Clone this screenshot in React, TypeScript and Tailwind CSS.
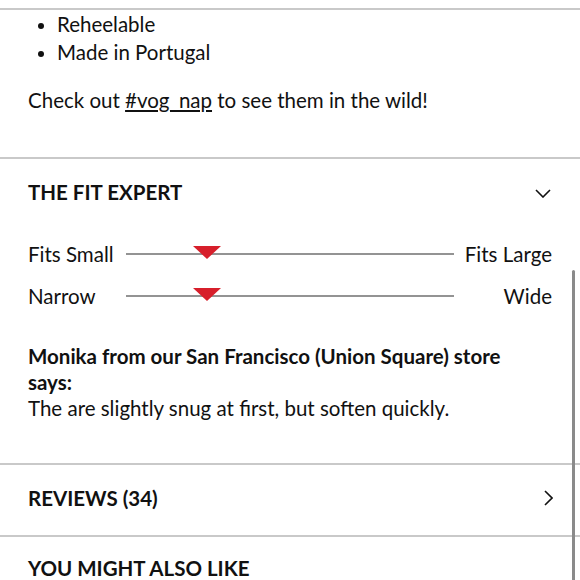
import React from 'react';

const font = { fontFamily: 'Lato, "Noto Sans", sans-serif' };

function FitRow({ left, right }: { left: string; right: string }) {
  return (
    <div className="flex h-[28px] items-center">
      <span className="w-[98px] shrink-0 whitespace-nowrap">{left}</span>
      <div className="relative h-[1.5px] flex-1 bg-[#939393]">
        {/* marker */}
        <svg
          className="absolute left-[67px] top-[-7px]"
          width="28"
          height="13"
          viewBox="0 0 28 13"
        >
          <path d="M0 0 H28 L14 13 Z" fill="#d71f2b" />
        </svg>
      </div>
      <span className="w-[98px] shrink-0 whitespace-nowrap text-right">{right}</span>
    </div>
  );
}

export default function App() {
  return (
    <div
      className="relative h-[580px] w-[580px] overflow-hidden bg-white text-[20.5px] text-[#111]"
      style={font}
    >
      <div className="h-[10px] border-b-2 border-[#c9c9c9]" />

      <div className="px-[28px]">
        <ul className="list-disc pl-[29px] leading-[28px] marker:text-[19px]">
          <li>Reheelable</li>
          <li>Made in Portugal</li>
        </ul>
        <p className="mt-[20px] leading-[28px]">
          Check out <span className="underline underline-offset-2">#vog_nap</span> to see them in the wild!
        </p>
      </div>

      <div className="mt-[43px] border-b-2 border-[#c9c9c9]" />

      <div className="px-[28px] pt-[19px]">
        <div className="flex h-[28px] items-center justify-between">
          <h3 className="font-bold">THE FIT EXPERT</h3>
          <svg width="16" height="9" viewBox="0 0 16 9" className="mr-[1px] mt-[3px]">
            <path d="M1 1 L8 8 L15 1" fill="none" stroke="#111" strokeWidth="1.6" />
          </svg>
        </div>

        <div className="mt-[34px] flex flex-col gap-[14px]">
          <FitRow left="Fits Small" right="Fits Large" />
          <FitRow left="Narrow" right="Wide" />
        </div>

        <div className="mt-[33px] leading-[26px]">
          <p className="pr-[20px] font-bold">Monika from our San Francisco (Union Square) store says:</p>
          <p>The are slightly snug at first, but soften quickly.</p>
        </div>
      </div>

      <div className="mt-[42px] border-b-2 border-[#c9c9c9]" />

      <div className="flex h-[70px] items-center justify-between px-[28px] pb-[4px]">
        <h3 className="font-bold">REVIEWS (34)</h3>
        <svg width="9" height="16" viewBox="0 0 9 16" className="mr-[-1px]">
          <path d="M1 1 L8 8 L1 15" fill="none" stroke="#111" strokeWidth="1.6" />
        </svg>
      </div>

      <div className="border-b-2 border-[#c9c9c9]" />

      <div className="px-[28px] pt-[17px]">
        <h3 className="font-bold leading-[28px]">YOU MIGHT ALSO LIKE</h3>
      </div>

      {/* scroll indicator */}
      <div className="absolute left-[572px] top-[270px] h-[320px] w-[3px] rounded-full bg-[#8a8a8a]" />
    </div>
  );
}
